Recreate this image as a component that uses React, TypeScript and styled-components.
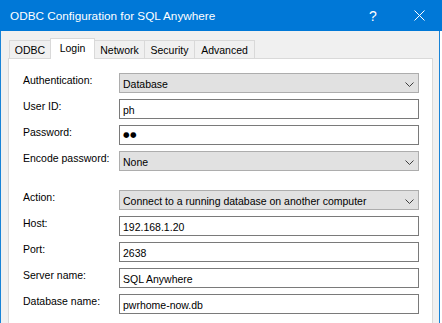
import React from 'react';
import styled, { createGlobalStyle } from 'styled-components';

const GlobalStyle = createGlobalStyle`
  html, body {
    margin: 0;
    padding: 0;
    background: #fff;
  }
  body {
    font-family: "Liberation Sans", Arial, sans-serif;
    color: #000;
  }
`;

const Window = styled.div`
  width: 442px;
  height: 323px;
  overflow: hidden;
  display: flex;
  flex-direction: column;
  background: #fff;
`;

const TitleBar = styled.div`
  flex: none;
  height: 31px;
  display: flex;
  align-items: center;
  background: #0078d7;
  color: #fff;
`;

const Title = styled.div`
  flex: 1;
  padding-left: 10px;
  font-size: 11.75px;
  white-space: nowrap;
`;

const CaptionButton = styled.div`
  width: 46px;
  height: 31px;
  display: flex;
  align-items: center;
  justify-content: center;
  font-size: 14px;
`;

const Body = styled.div`
  flex: 1;
  display: flex;
  flex-direction: column;
  margin-right: 2px;
  padding: 7px 6px 0 7px;
  background: #f0f0f0;
  border-left: 1px solid #1883d7;
  border-right: 1px solid #1883d7;
`;

const TabStrip = styled.div`
  flex: none;
  height: 20px;
  display: flex;
  align-items: flex-end;
  padding-left: 1px;
`;

const Tab = styled.div<{ $w: number; $active?: boolean }>`
  box-sizing: border-box;
  width: ${p => p.$w}px;
  height: ${p => (p.$active ? 21 : 18)}px;
  margin-left: -1px;
  margin-bottom: ${p => (p.$active ? -1 : 0)}px;
  padding-top: 2px;
  border: 1px solid #d9d9d9;
  border-bottom: none;
  background: ${p => (p.$active ? '#fff' : '#f0f0f0')};
  position: relative;
  z-index: ${p => (p.$active ? 1 : 0)};
  font-size: 10.5px;
  line-height: 14px;
  text-align: center;
  white-space: nowrap;

  &:first-child {
    margin-left: 0;
  }
`;

const Panel = styled.div`
  flex: 1;
  box-sizing: border-box;
  padding: 14px 13px 0 14px;
  background: #fff;
  border: 1px solid #d9d9d9;
  border-bottom: none;
`;

const FormGrid = styled.div<{ $gapAbove?: number }>`
  display: grid;
  grid-template-columns: 96px 1fr;
  grid-auto-rows: 20px;
  row-gap: 6px;
  margin-top: ${p => p.$gapAbove ?? 0}px;
`;

const Label = styled.div`
  font-size: 10.5px;
  line-height: 14px;
  white-space: nowrap;
`;

const TextBox = styled.div`
  box-sizing: border-box;
  height: 20px;
  padding: 2px 4px 0 3px;
  border: 1px solid #7a7a7a;
  background: #fff;
  font-size: 10.5px;
  line-height: 16px;
  white-space: nowrap;
  overflow: hidden;
`;

const PasswordBox = styled(TextBox)`
  padding-top: 1px;
  font-family: "DejaVu Sans", sans-serif;
  font-size: 7.5px;
  letter-spacing: 0.5px;
`;

const Combo = styled.div`
  box-sizing: border-box;
  height: 20px;
  display: flex;
  align-items: flex-start;
  padding: 2px 4px 0 3px;
  border: 1px solid #adadad;
  background: #e1e1e1;
  font-size: 10.5px;
  line-height: 16px;
  white-space: nowrap;
`;

const ComboText = styled.span`
  flex: 1;
  overflow: hidden;
`;

const Chevron = styled.svg`
  flex: none;
  margin-top: 6px;
`;

const ChevronIcon = () => (
  <Chevron width="9" height="5" viewBox="0 0 9 5">
    <path d="M0.5 0.5 L4.5 4.5 L8.5 0.5" fill="none" stroke="#3c3c3c" strokeWidth="1" />
  </Chevron>
);

const CloseIcon = () => (
  <svg width="11" height="11" viewBox="0 0 11 11">
    <path d="M0.5 0.5 L10.5 10.5 M10.5 0.5 L0.5 10.5" stroke="#fff" strokeWidth="1" />
  </svg>
);

const ComboField = ({ value }: { value: string }) => (
  <Combo>
    <ComboText>{value}</ComboText>
    <ChevronIcon />
  </Combo>
);

const tabs = [
  { name: 'ODBC', w: 42 },
  { name: 'Login', w: 45, active: true },
  { name: 'Network', w: 51 },
  { name: 'Security', w: 51 },
  { name: 'Advanced', w: 61 },
];

export default function App() {
  return (
    <>
      <GlobalStyle />
      <Window>
        <TitleBar>
          <Title>ODBC Configuration for SQL Anywhere</Title>
          <CaptionButton>?</CaptionButton>
          <CaptionButton>
            <CloseIcon />
          </CaptionButton>
        </TitleBar>
        <Body>
          <TabStrip>
            {tabs.map(t => (
              <Tab key={t.name} $w={t.w} $active={t.active}>
                {t.name}
              </Tab>
            ))}
          </TabStrip>
          <Panel>
            <FormGrid>
              <Label>Authentication:</Label>
              <ComboField value="Database" />
              <Label>User ID:</Label>
              <TextBox>ph</TextBox>
              <Label>Password:</Label>
              <PasswordBox>●●</PasswordBox>
              <Label>Encode password:</Label>
              <ComboField value="None" />
            </FormGrid>
            <FormGrid $gapAbove={19}>
              <Label>Action:</Label>
              <ComboField value="Connect to a running database on another computer" />
              <Label>Host:</Label>
              <TextBox>192.168.1.20</TextBox>
              <Label>Port:</Label>
              <TextBox>2638</TextBox>
              <Label>Server name:</Label>
              <TextBox>SQL Anywhere</TextBox>
              <Label>Database name:</Label>
              <TextBox>pwrhome-now.db</TextBox>
            </FormGrid>
          </Panel>
        </Body>
      </Window>
    </>
  );
}
